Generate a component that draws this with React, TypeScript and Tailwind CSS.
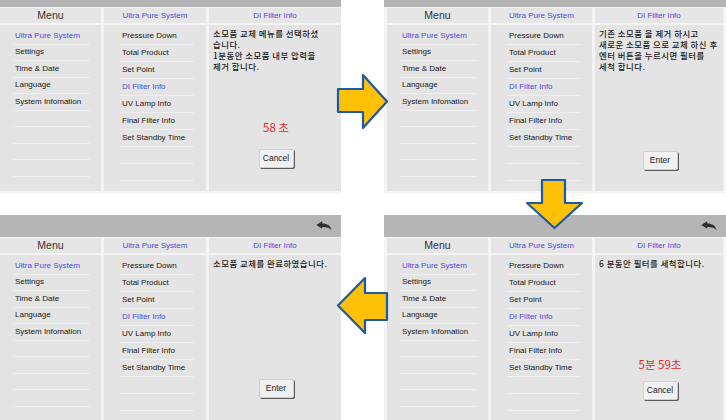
import type { ReactNode } from 'react'

const sans = "font-['Liberation_Sans','Noto_Sans_CJK_KR',sans-serif]"
const kr = "font-['Noto_Sans_CJK_KR','Liberation_Sans',sans-serif]"

const menuItems = [
  { label: 'Ultra Pure System', active: true },
  { label: 'Settings' },
  { label: 'Time & Date' },
  { label: 'Language' },
  { label: 'System Infomation' },
  { label: '' },
  { label: '' },
  { label: '' },
  { label: '' },
]

const systemItems = [
  { label: 'Pressure Down' },
  { label: 'Total Product' },
  { label: 'Set Point' },
  { label: 'DI Filter Info', active: true },
  { label: 'UV Lamp Info' },
  { label: 'Final Filter Info' },
  { label: 'Set Standby Time' },
  { label: '' },
  { label: '' },
]

function BackIcon() {
  return (
    <svg width="16" height="10" viewBox="0 0 16 10" className="text-[#2f2f2f]">
      <path d="M0.3 4 L6.2 0.2 V7.8 Z" fill="currentColor" />
      <path
        d="M5.5 2.4 C10.8 2.2 14.6 4 15.7 9.6 C13.6 6.6 10.6 5.9 5.5 6 Z"
        fill="currentColor"
      />
    </svg>
  )
}

function Rows({ items, rowClass }: { items: { label: string; active?: boolean }[]; rowClass: string }) {
  return (
    <div className="flex flex-col pt-[3px]">
      {items.map((it, i) => (
        <div
          key={i}
          className={`${rowClass} flex items-center border-b border-[#efefef] pl-[2px] text-[8px] ${
            it.active ? 'text-[#4b4bdc]' : 'text-[#161616]'
          }`}
        >
          {it.label}
        </div>
      ))}
    </div>
  )
}

function Panel({
  width,
  grid,
  text,
  action,
  counter,
  actionWrap,
}: {
  width: string
  grid: string
  text: ReactNode
  action: string
  counter?: string
  actionWrap: string
}) {
  return (
    <div className={`${width} flex h-[208px] shrink-0 flex-col bg-[#f4f4f4] ${sans}`}>
      <div className="flex h-[22px] items-center justify-end bg-[#b5b5b5] pr-[9px]">
        <BackIcon />
      </div>
      <div className={`grid flex-1 grid-rows-[15px_166px] gap-x-[3px] gap-y-[2px] pt-px ${grid}`}>
        <div className="flex items-center justify-center bg-[#e6e6e6] text-[10.5px] text-[#333]">Menu</div>
        <div className="flex items-center justify-center bg-[#e6e6e6] text-[8px] text-[#4b4bdc]">
          Ultra Pure System
        </div>
        <div className="flex items-center justify-center bg-[#e6e6e6] text-[8px] text-[#4b4bdc]">
          DI Filter Info
        </div>

        <div className="overflow-hidden bg-[#e4e4e4] pl-[13px] pr-[11px]">
          <Rows items={menuItems} rowClass="h-[16.5px]" />
        </div>
        <div className="overflow-hidden bg-[#e4e4e4] pl-[16px] pr-[12px]">
          <Rows items={systemItems} rowClass="h-[17px]" />
        </div>
        <div className={`flex flex-col bg-[#e4e4e4] pl-[4px] pr-[2px] pt-[3px] ${actionWrap}`}>
          <div className={`${kr} text-[8.4px] font-medium leading-[11px] tracking-[0.5px] text-[#1a1a1a]`}>
            {text}
          </div>
          <div className="mt-auto flex flex-col items-center">
            {counter ? (
              <div className={`${kr} text-[11.5px] leading-[13px] text-[#e62828]`}>{counter}</div>
            ) : null}
            <button
              type="button"
              className="flex h-[19px] w-[35px] items-center justify-center rounded-[2px] border border-[#d0d0d0] bg-[#f1f1f1] text-[8.5px] text-[#222] shadow-[1px_1px_0_#5a5a5a]"
            >
              {action}
            </button>
          </div>
        </div>
      </div>
    </div>
  )
}

function Arrow({ className, points, w, h }: { className: string; points: string; w: number; h: number }) {
  return (
    <svg width={w} height={h} viewBox={`0 0 ${w} ${h}`} className={`absolute ${className}`}>
      <polygon points={points} fill="#ffc107" stroke="#1d5aa6" strokeWidth="2.2" strokeLinejoin="round" />
    </svg>
  )
}

export default function App() {
  const leftGrid = 'grid-cols-[101px_102px_132px]'
  const rightGrid = 'grid-cols-[101px_101px_128px] px-[3px]'

  return (
    <div className="relative h-[420px] w-[726px] overflow-hidden bg-white">
      <div className="-mt-[15px] flex flex-col gap-[22px]">
        <div className="flex gap-[43px]">
          <Panel
            width="w-[341px]"
            grid={leftGrid}
            text={
              <>
                소모품 교체 메뉴를 선택하셨
                <br />
                습니다.
                <br />
                1분동안 소모품 내부 압력을
                <br />
                제거 합니다.
              </>
            }
            counter="58 초"
            action="Cancel"
            actionWrap="pb-[23px] [&>div:last-child>div]:mb-[15px]"
          />
          <Panel
            width="w-[342px]"
            grid={rightGrid}
            text={
              <>
                기존 소모품 을 제거 하시고
                <br />
                새로운 소모품 으로 교체 하신 후
                <br />
                엔터 버튼을 누르시면 필터를
                <br />
                세척 합니다.
              </>
            }
            action="Enter"
            actionWrap="pb-[21px]"
          />
        </div>
        <div className="flex gap-[43px]">
          <Panel
            width="w-[341px]"
            grid={leftGrid}
            text={<>소모품 교체를 완료하였습니다.</>}
            action="Enter"
            actionWrap="pb-[23px]"
          />
          <Panel
            width="w-[342px]"
            grid={rightGrid}
            text={<>6 분동안 필터를 세척합니다.</>}
            counter="5분 59초"
            action="Cancel"
            actionWrap="pb-[21px] [&>div:last-child>div]:mb-[10px]"
          />
        </div>
      </div>

      <Arrow
        className="left-[336px] top-[73px]"
        w={53}
        h={57}
        points="2,16 27,16 27,2 51,28.5 27,55 27,39 2,39"
      />
      <Arrow
        className="left-[525px] top-[178px]"
        w={59}
        h={52}
        points="17,2 40,2 40,25 57,25 29.5,50 2,25 17,25"
      />
      <Arrow
        className="left-[336px] top-[276px]"
        w={53}
        h={59}
        points="51,17 29,17 29,2 2,29.5 29,57 29,44 51,44"
      />
    </div>
  )
}
